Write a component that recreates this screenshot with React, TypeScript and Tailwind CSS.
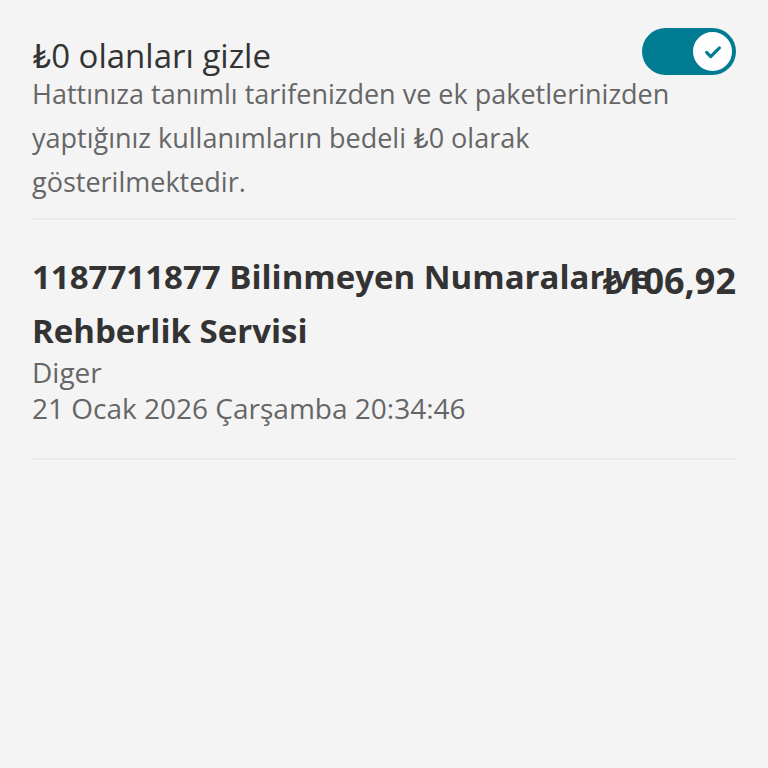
import React from "react";

export default function App() {
  return (
    <div
      className="min-h-[768px] w-full bg-[#f4f4f4] px-8 pt-[36px]"
      style={{ fontFamily: "'Open Sans', Lato, sans-serif" }}
    >
      <div className="relative pb-[14px] border-b-2 border-[#ebebeb]">
        <div className="flex items-start justify-between">
          <div className="text-[33px] leading-[40px] text-[#333333]">₺0 olanları gizle</div>
          <div className="mt-[-8px] relative h-[47px] w-[94px] rounded-full bg-[#007c92]">
            <div className="absolute right-[2px] top-[2px] flex h-[43px] w-[43px] items-center justify-center rounded-full bg-white border-2 border-[#007c92]">
              <svg width="22" height="22" viewBox="0 0 24 24" fill="none">
                <path d="M5 12.5l4.5 4.5L19 7.5" stroke="#007c92" strokeWidth="3.4" strokeLinecap="round" strokeLinejoin="round" />
              </svg>
            </div>
          </div>
        </div>
        <div className="mt-[-4px] text-[27px] leading-[44px] text-[#666666]">
          Hattınıza tanımlı tarifenizden ve ek paketlerinizden yaptığınız kullanımların bedeli ₺0 olarak gösterilmektedir.
        </div>
      </div>
      <div className="relative pt-[30px] pb-[32px] border-b-2 border-[#ebebeb]">
        <div className="text-[33px] leading-[54px] font-bold text-[#333333]">
          1187711877 Bilinmeyen Numaralar ve Rehberlik Servisi
        </div>
        <div className="absolute right-0 top-[34px] text-[36px] leading-[54px] font-bold text-[#333333]">₺106,92</div>
        <div className="mt-[-4px] text-[28px] leading-[36px] text-[#666666]">Diger</div>
        <div className="text-[28px] leading-[36px] text-[#666666]">21 Ocak 2026 Çarşamba 20:34:46</div>
      </div>
    </div>
  );
}
